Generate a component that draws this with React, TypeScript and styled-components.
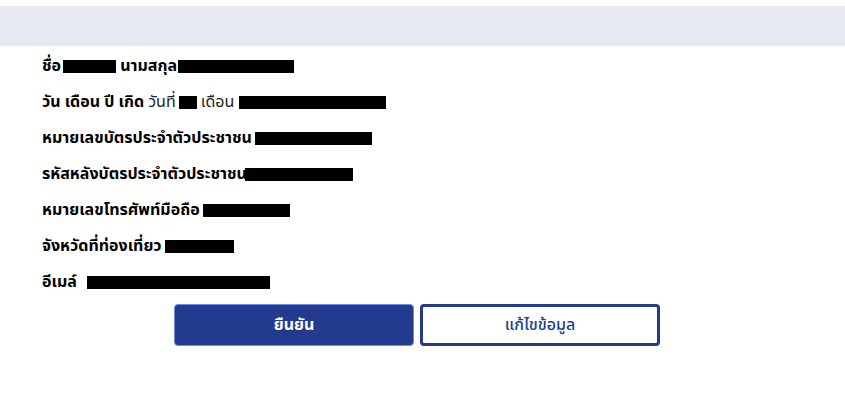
import React from "react";
import styled, { createGlobalStyle } from "styled-components";

const Global = createGlobalStyle`
  html, body { margin: 0; padding: 0; background: #ffffff; }
  body { font-family: Tahoma, "Noto Sans Thai", "Noto Sans", "DejaVu Sans", sans-serif; color: #000; }
`;

const Page = styled.div`
  padding-top: 6px;
`;

const Header = styled.div`
  height: 40px;
  background: #e7e9f2;
`;

const Info = styled.div`
  padding: 9px 0 0 42px;
  display: flex;
  flex-direction: column;
  gap: 14px;
`;

const Row = styled.div`
  display: flex;
  align-items: center;
  height: 22px;
  font-size: 16px;
  white-space: nowrap;
`;

const Label = styled.span`
  font-weight: 700;
`;

const Plain = styled.span`
  font-weight: 400;
  color: #222;
`;

const Redact = styled.span<{ $w: number; $ml?: number }>`
  display: inline-block;
  width: ${(p) => p.$w}px;
  height: 13px;
  margin-left: ${(p) => p.$ml ?? 4}px;
  background: #000;
`;

const Actions = styled.div`
  display: flex;
  gap: 6px;
  padding-left: 174px;
  margin-top: 11px;
`;

const Button = styled.button<{ $primary?: boolean }>`
  width: 240px;
  height: 42px;
  border-radius: 4px;
  font-family: inherit;
  font-size: 16px;
  cursor: pointer;
  box-sizing: border-box;
  ${(p) =>
    p.$primary
      ? `background: #233a8e; color: #fff; font-weight: 700; border: 1px solid #6c8be6;`
      : `background: #fff; color: #233a8e; font-weight: 500; border: 3px solid #233a8e;`}
`;

export default function App() {
  return (
    <>
      <Global />
      <Page>
        <Header />
        <Info>
          <Row>
            <Label>ชื่อ</Label>
            <Redact $w={53} $ml={2} />
            <Label>&nbsp;นามสกุล</Label>
            <Redact $w={116} $ml={1} />
          </Row>
          <Row>
            <Label>วัน เดือน ปี เกิด</Label>
            <Plain>&nbsp;วันที่</Plain>
            <Redact $w={18} $ml={3} />
            <Plain>&nbsp;เดือน</Plain>
            <Redact $w={147} $ml={5} />
          </Row>
          <Row>
            <Label>หมายเลขบัตรประจำตัวประชาชน</Label>
            <Redact $w={117} $ml={3} />
          </Row>
          <Row>
            <Label>รหัสหลังบัตรประจำตัวประชาชน</Label>
            <Redact $w={108} $ml={-2} />
          </Row>
          <Row>
            <Label>หมายเลขโทรศัพท์มือถือ</Label>
            <Redact $w={87} $ml={3} />
          </Row>
          <Row>
            <Label>จังหวัดที่ท่องเที่ยว</Label>
            <Redact $w={69} $ml={3} />
          </Row>
          <Row>
            <Label>อีเมล์</Label>
            <Redact $w={183} $ml={10} />
          </Row>
        </Info>
        <Actions>
          <Button $primary>ยืนยัน</Button>
          <Button>แก้ไขข้อมูล</Button>
        </Actions>
      </Page>
    </>
  );
}
